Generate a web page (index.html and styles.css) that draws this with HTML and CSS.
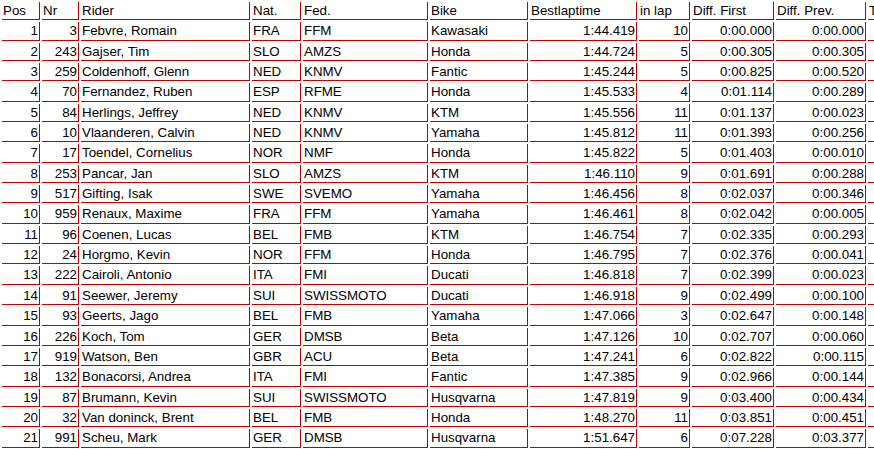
FILE: index.html
```html
<!DOCTYPE html>
<html>
<head>
<meta charset="utf-8">
<link rel="stylesheet" href="styles.css">
</head>
<body>
<table class="results">
<thead>
<tr><th>Pos</th><th>Nr</th><th>Rider</th><th>Nat.</th><th>Fed.</th><th>Bike</th><th>Bestlaptime</th><th>in lap</th><th>Diff. First</th><th>Diff. Prev.</th><th>T</th></tr>
</thead>
<tbody>
<tr><td>1</td><td>3</td><td>Febvre, Romain</td><td>FRA</td><td>FFM</td><td>Kawasaki</td><td>1:44.419</td><td>10</td><td>0:00.000</td><td>0:00.000</td><td></td></tr>
<tr><td>2</td><td>243</td><td>Gajser, Tim</td><td>SLO</td><td>AMZS</td><td>Honda</td><td>1:44.724</td><td>5</td><td>0:00.305</td><td>0:00.305</td><td></td></tr>
<tr><td>3</td><td>259</td><td>Coldenhoff, Glenn</td><td>NED</td><td>KNMV</td><td>Fantic</td><td>1:45.244</td><td>5</td><td>0:00.825</td><td>0:00.520</td><td></td></tr>
<tr><td>4</td><td>70</td><td>Fernandez, Ruben</td><td>ESP</td><td>RFME</td><td>Honda</td><td>1:45.533</td><td>4</td><td>0:01.114</td><td>0:00.289</td><td></td></tr>
<tr><td>5</td><td>84</td><td>Herlings, Jeffrey</td><td>NED</td><td>KNMV</td><td>KTM</td><td>1:45.556</td><td>11</td><td>0:01.137</td><td>0:00.023</td><td></td></tr>
<tr><td>6</td><td>10</td><td>Vlaanderen, Calvin</td><td>NED</td><td>KNMV</td><td>Yamaha</td><td>1:45.812</td><td>11</td><td>0:01.393</td><td>0:00.256</td><td></td></tr>
<tr><td>7</td><td>17</td><td>Toendel, Cornelius</td><td>NOR</td><td>NMF</td><td>Honda</td><td>1:45.822</td><td>5</td><td>0:01.403</td><td>0:00.010</td><td></td></tr>
<tr><td>8</td><td>253</td><td>Pancar, Jan</td><td>SLO</td><td>AMZS</td><td>KTM</td><td>1:46.110</td><td>9</td><td>0:01.691</td><td>0:00.288</td><td></td></tr>
<tr><td>9</td><td>517</td><td>Gifting, Isak</td><td>SWE</td><td>SVEMO</td><td>Yamaha</td><td>1:46.456</td><td>8</td><td>0:02.037</td><td>0:00.346</td><td></td></tr>
<tr><td>10</td><td>959</td><td>Renaux, Maxime</td><td>FRA</td><td>FFM</td><td>Yamaha</td><td>1:46.461</td><td>8</td><td>0:02.042</td><td>0:00.005</td><td></td></tr>
<tr><td>11</td><td>96</td><td>Coenen, Lucas</td><td>BEL</td><td>FMB</td><td>KTM</td><td>1:46.754</td><td>7</td><td>0:02.335</td><td>0:00.293</td><td></td></tr>
<tr><td>12</td><td>24</td><td>Horgmo, Kevin</td><td>NOR</td><td>FFM</td><td>Honda</td><td>1:46.795</td><td>7</td><td>0:02.376</td><td>0:00.041</td><td></td></tr>
<tr><td>13</td><td>222</td><td>Cairoli, Antonio</td><td>ITA</td><td>FMI</td><td>Ducati</td><td>1:46.818</td><td>7</td><td>0:02.399</td><td>0:00.023</td><td></td></tr>
<tr><td>14</td><td>91</td><td>Seewer, Jeremy</td><td>SUI</td><td>SWISSMOTO</td><td>Ducati</td><td>1:46.918</td><td>9</td><td>0:02.499</td><td>0:00.100</td><td></td></tr>
<tr><td>15</td><td>93</td><td>Geerts, Jago</td><td>BEL</td><td>FMB</td><td>Yamaha</td><td>1:47.066</td><td>3</td><td>0:02.647</td><td>0:00.148</td><td></td></tr>
<tr><td>16</td><td>226</td><td>Koch, Tom</td><td>GER</td><td>DMSB</td><td>Beta</td><td>1:47.126</td><td>10</td><td>0:02.707</td><td>0:00.060</td><td></td></tr>
<tr><td>17</td><td>919</td><td>Watson, Ben</td><td>GBR</td><td>ACU</td><td>Beta</td><td>1:47.241</td><td>6</td><td>0:02.822</td><td>0:00.115</td><td></td></tr>
<tr><td>18</td><td>132</td><td>Bonacorsi, Andrea</td><td>ITA</td><td>FMI</td><td>Fantic</td><td>1:47.385</td><td>9</td><td>0:02.966</td><td>0:00.144</td><td></td></tr>
<tr><td>19</td><td>87</td><td>Brumann, Kevin</td><td>SUI</td><td>SWISSMOTO</td><td>Husqvarna</td><td>1:47.819</td><td>9</td><td>0:03.400</td><td>0:00.434</td><td></td></tr>
<tr><td>20</td><td>32</td><td>Van doninck, Brent</td><td>BEL</td><td>FMB</td><td>Honda</td><td>1:48.270</td><td>11</td><td>0:03.851</td><td>0:00.451</td><td></td></tr>
<tr><td>21</td><td>991</td><td>Scheu, Mark</td><td>GER</td><td>DMSB</td><td>Husqvarna</td><td>1:51.647</td><td>6</td><td>0:07.228</td><td>0:03.377</td><td></td></tr>
</tbody>
</table>
</body>
</html>
```
FILE: styles.css
```css
html, body {
  margin: 0;
  padding: 0;
  background: #fff;
  overflow: hidden;
}

.results {
  font-family: "Liberation Sans", Arial, sans-serif;
  font-size: 13.333px;
  color: #000;
  border-collapse: separate;
  border-spacing: 2px;
  table-layout: fixed;
  width: 948px;
}

.results th,
.results td {
  box-sizing: border-box;
  padding: 1px;
  border-right: 1px solid #c00000;
  border-bottom: 1px solid #c00000;
  font-weight: normal;
  text-align: left;
  white-space: nowrap;
  overflow: hidden;
  line-height: 15.35px;
}

.results th:nth-child(1) { width: 38px; }
.results th:nth-child(2) { width: 37px; }
.results th:nth-child(3) { width: 169px; }
.results th:nth-child(4) { width: 49px; }
.results th:nth-child(5) { width: 125px; }
.results th:nth-child(6) { width: 98px; }
.results th:nth-child(7) { width: 107px; }
.results th:nth-child(8) { width: 51px; }
.results th:nth-child(9) { width: 82px; }
.results th:nth-child(10) { width: 90px; }
.results th:nth-child(11) { width: 78px; }

.results td:nth-child(1),
.results td:nth-child(2),
.results td:nth-child(7),
.results td:nth-child(8),
.results td:nth-child(9),
.results td:nth-child(10) {
  text-align: right;
}
```
